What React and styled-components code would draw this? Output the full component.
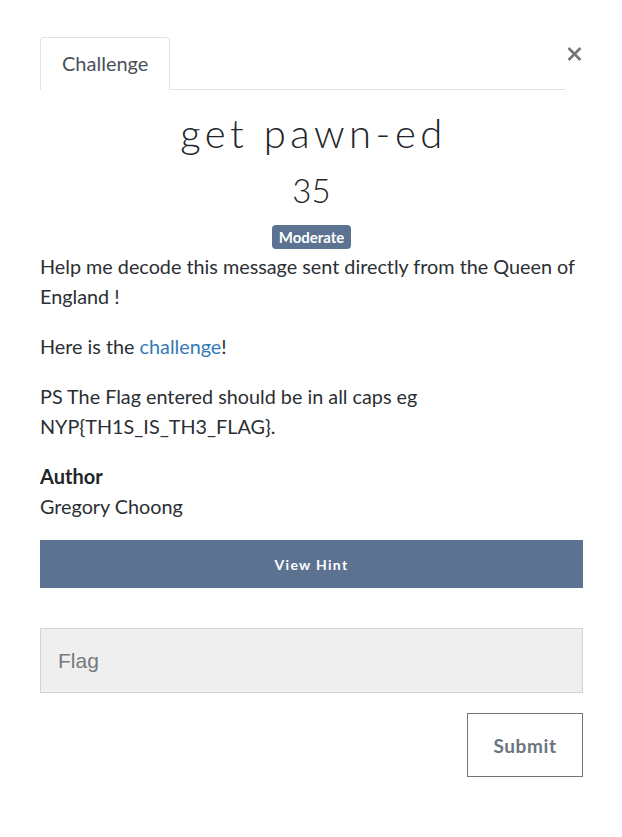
import React from 'react';
import styled, { createGlobalStyle } from 'styled-components';

const GlobalStyle = createGlobalStyle`
  html, body { margin: 0; padding: 0; background: #fff; }
  body { font-family: Lato, "Open Sans", sans-serif; color: #212529; }
  * { box-sizing: border-box; }
`;

const Modal = styled.div`
  width: 622px;
  padding: 37px 39px 40px 40px;
  display: flex;
  flex-direction: column;
`;

const Header = styled.div`
  display: flex;
  align-items: flex-start;
`;

const Tabs = styled.ul`
  flex: 1;
  display: flex;
  margin: 0;
  padding: 0;
  list-style: none;
  border-bottom: 1px solid #dee2e6;
`;

const Tab = styled.li`
  margin-bottom: -1px;
  padding: 10px 21px 11px;
  border: 1px solid #dee2e6;
  border-bottom-color: #fff;
  border-radius: 4px 4px 0 0;
  background: #fff;
  font-size: 20px;
  line-height: 30px;
  color: #495057;
`;

const Close = styled.button`
  width: 18px;
  height: 18px;
  margin-top: 8px;
  padding: 0;
  border: 0;
  background: none;
  display: flex;
  align-items: center;
  justify-content: center;
  color: #777;
`;

const Title = styled.h1`
  margin: 19px 0 0;
  padding-left: 4px;
  text-align: center;
  font-size: 40px;
  font-weight: 300;
  line-height: 48px;
  letter-spacing: 4.5px;
  color: #212529;
`;

const Value = styled.div`
  margin-top: 13px;
  text-align: center;
  font-size: 33px;
  font-weight: 300;
  line-height: 40px;
  color: #212529;
`;

const BadgeRow = styled.div`
  display: flex;
  justify-content: center;
  margin-top: 15px;
  margin-bottom: 2px;
`;

const Badge = styled.span`
  display: inline-block;
  height: 24px;
  padding: 0 7px;
  border-radius: 4px;
  background: #5b7290;
  color: #fff;
  font-size: 15px;
  font-weight: 700;
  line-height: 24px;
`;

const Text = styled.p`
  margin: 0 0 20px;
  font-size: 19.8px;
  line-height: 30px;
  color: #2b2f33;
`;

const Link = styled.a`
  color: #337ab7;
  text-decoration: none;
`;

const AuthorHeading = styled.h5`
  margin: 0;
  font-size: 20px;
  font-weight: 700;
  line-height: 30px;
  color: #212529;
`;

const HintButton = styled.button`
  width: 100%;
  height: 48px;
  margin-top: -1px;
  border: 0;
  background: #5b7290;
  color: #fff;
  font-family: Lato, sans-serif;
  font-size: 14px;
  font-weight: 700;
  letter-spacing: 1.3px;
`;

const FlagInput = styled.input`
  margin-top: 40px;
  width: 100%;
  height: 65px;
  padding: 0 17px;
  border: 1px solid #ced4da;
  background: #efefef;
  font-family: "Liberation Sans", Arial, sans-serif;
  font-size: 21px;
  color: #495057;
  outline: none;
  &::placeholder { color: #737a80; }
`;

const SubmitRow = styled.div`
  display: flex;
  justify-content: flex-end;
  margin-top: 20px;
`;

const SubmitButton = styled.button`
  width: 116px;
  height: 64px;
  border: 1px solid #6c757d;
  background: #fff;
  color: #6c757d;
  font-family: Lato, sans-serif;
  font-size: 19px;
  font-weight: 700;
  letter-spacing: 0.6px;
`;

export default function App() {
  return (
    <>
      <GlobalStyle />
      <Modal>
        <Header>
          <Tabs>
            <Tab>Challenge</Tab>
          </Tabs>
          <Close aria-label="Close">
            <svg width="15" height="14" viewBox="0 0 15 14">
              <path d="M1.5 1 L13.5 13 M13.5 1 L1.5 13" stroke="currentColor" strokeWidth="2.6" strokeLinecap="butt" />
            </svg>
          </Close>
        </Header>
        <Title>get pawn-ed</Title>
        <Value>35</Value>
        <BadgeRow>
          <Badge>Moderate</Badge>
        </BadgeRow>
        <Text>Help me decode this message sent directly from the Queen of England !</Text>
        <Text>Here is the <Link href="#">challenge</Link>!</Text>
        <Text>PS The Flag entered should be in all caps eg NYP{'{'}TH1S_IS_TH3_FLAG{'}'}.</Text>
        <AuthorHeading>Author</AuthorHeading>
        <Text>Gregory Choong</Text>
        <HintButton>View Hint</HintButton>
        <FlagInput placeholder="Flag" />
        <SubmitRow>
          <SubmitButton>Submit</SubmitButton>
        </SubmitRow>
      </Modal>
    </>
  );
}
